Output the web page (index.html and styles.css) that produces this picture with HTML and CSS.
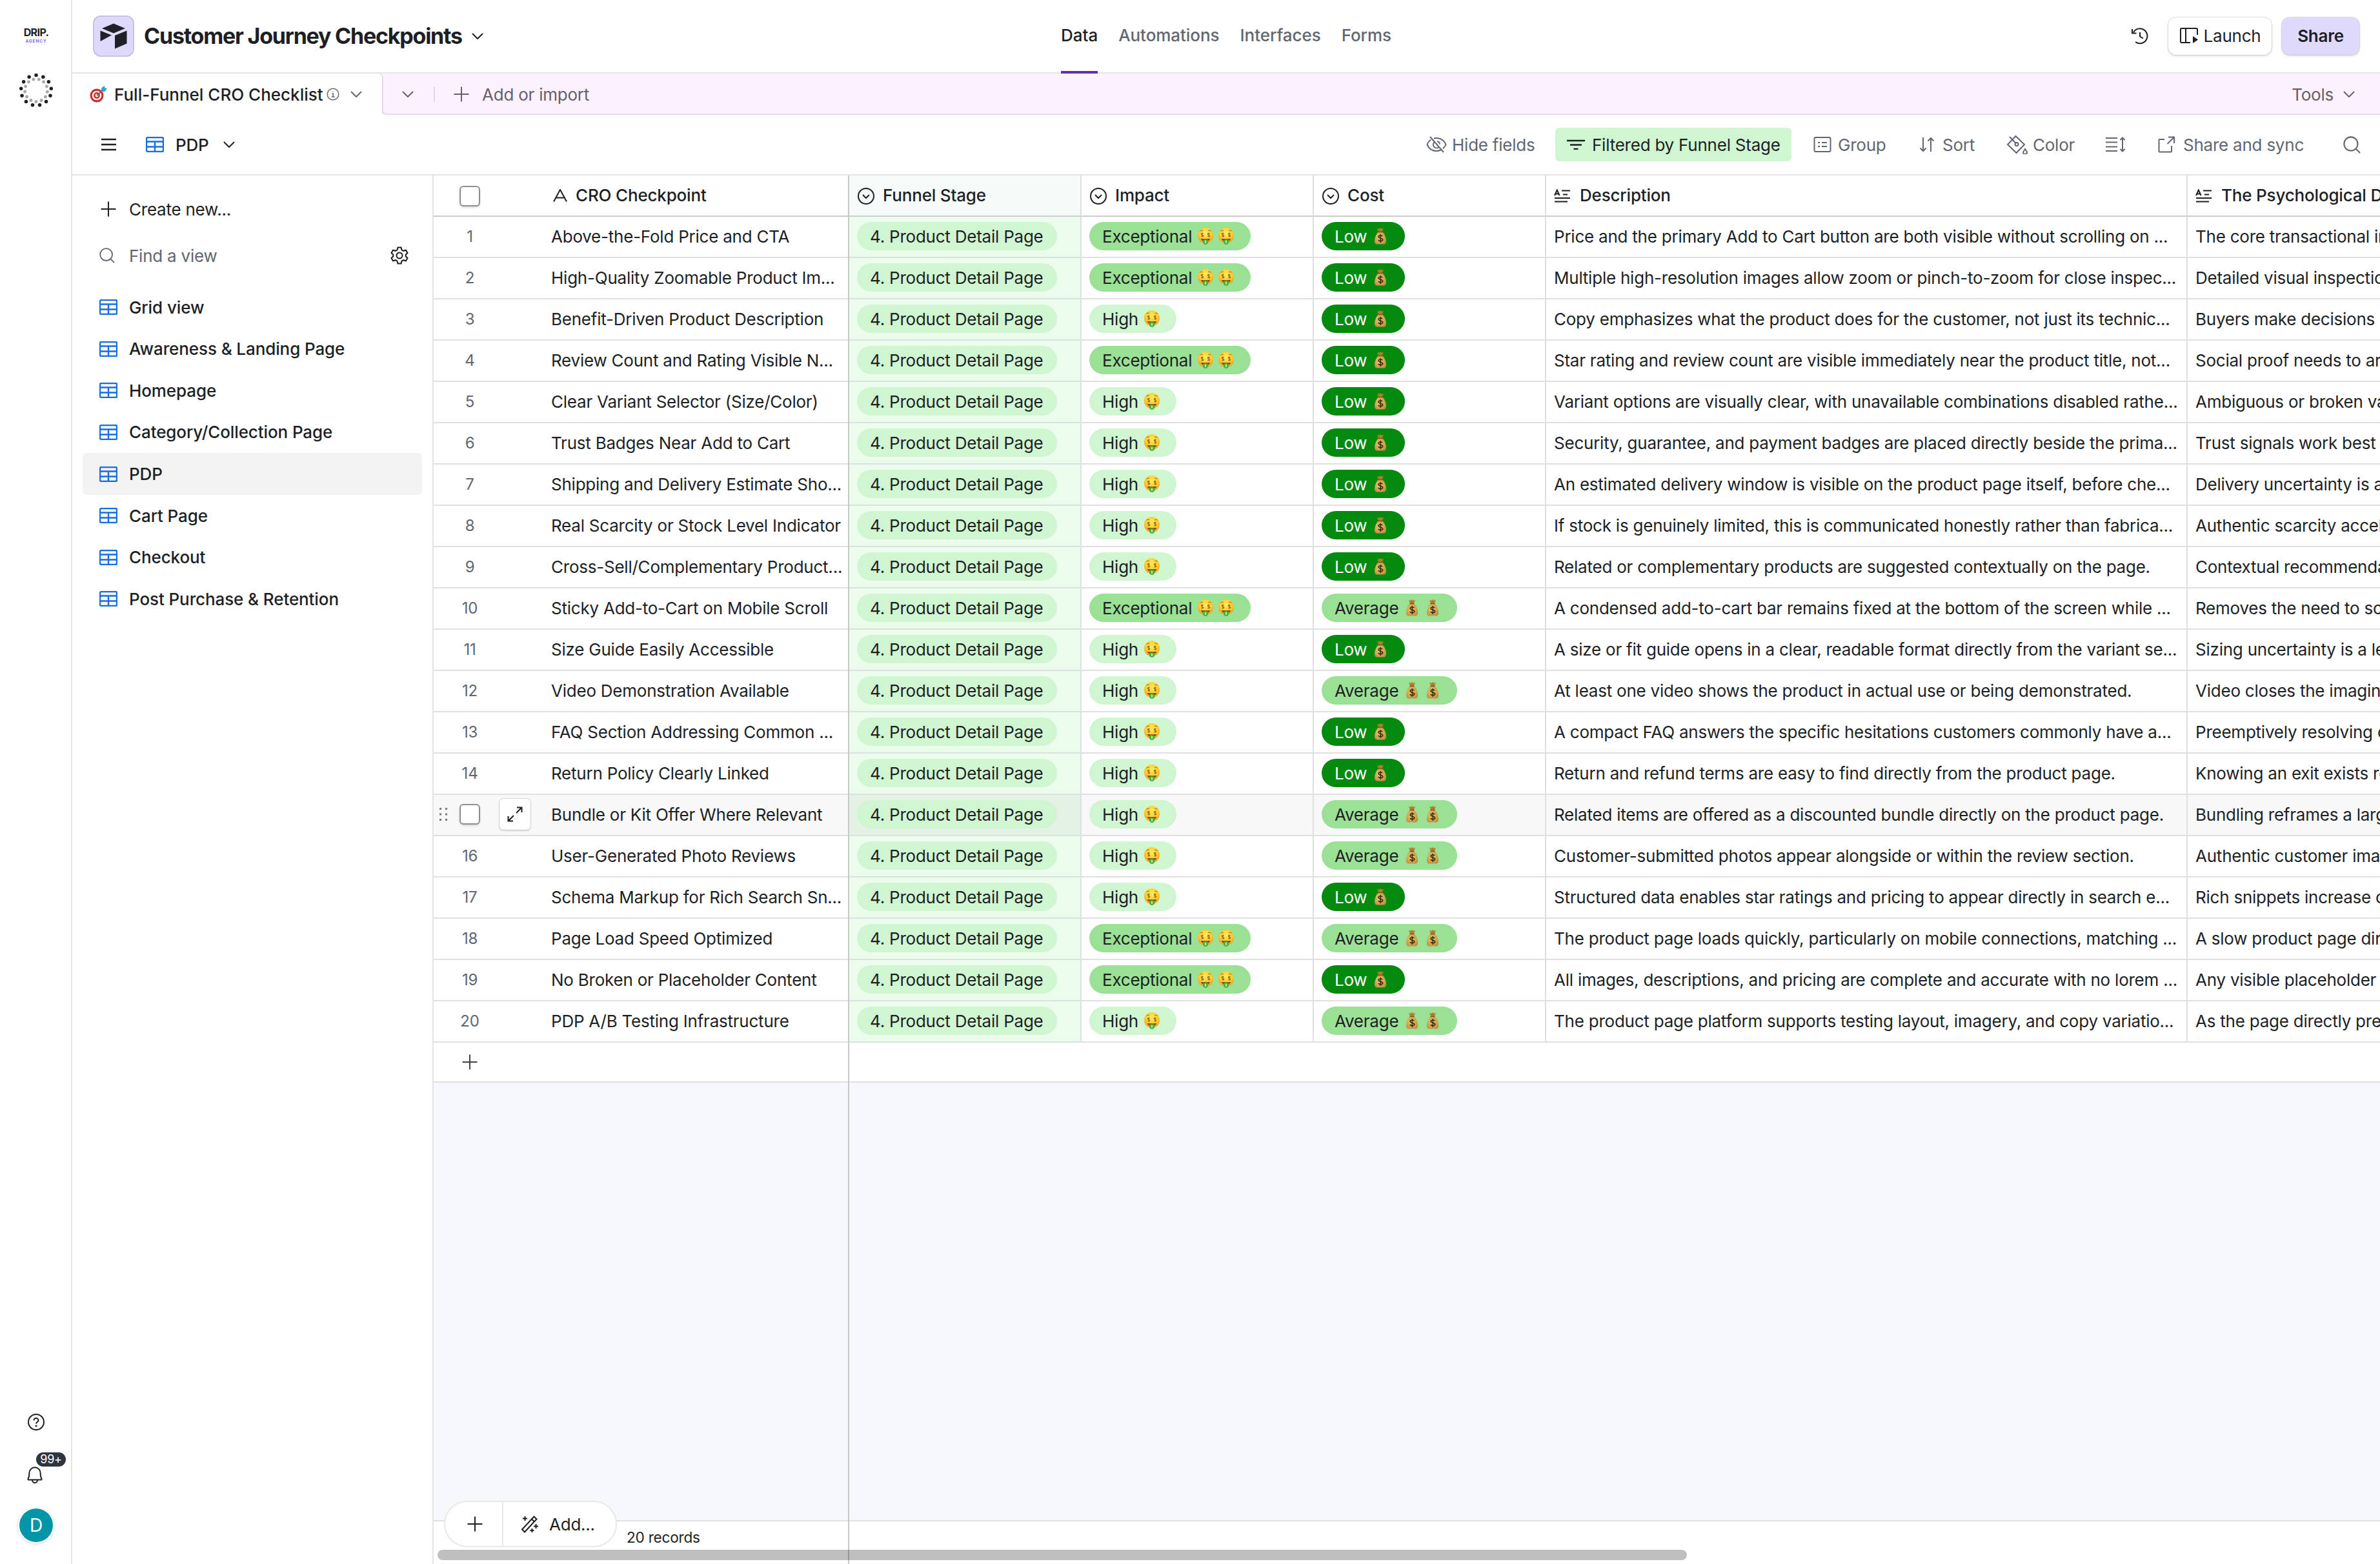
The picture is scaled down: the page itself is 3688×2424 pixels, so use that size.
FILE: index.html
```html
<!DOCTYPE html>
<html lang="en">
<head>
    <meta charset="UTF-8">
    <meta name="viewport" content="width=device-width, initial-scale=1.0">
    <title>Customer Journey Checkpoints</title>
    <link rel="stylesheet" href="styles.css">
</head>
<body>
    <!-- shared icons -->
    <svg class="sprite" width="0" height="0">
        <symbol id="i-grid" viewBox="0 0 28 24">
            <rect x="1" y="1" width="26" height="22" rx="2"/>
            <path d="M1 7.500h26M1 15.500h26M14 7.500V23"/>
        </symbol>
        <symbol id="i-chevron" viewBox="0 0 18 10"><path d="M1 1l8 8 8-8"/></symbol>
        <symbol id="i-plus" viewBox="0 0 24 24"><path d="M12 .5v23M.5 12h23"/></symbol>
        <symbol id="i-search" viewBox="0 0 26 26"><circle cx="11.500" cy="11.500" r="10.200"/><path d="M19 19l6 6"/></symbol>
        <symbol id="i-select" viewBox="0 0 28 28"><circle cx="14" cy="14" r="12"/><path d="M9 12l5 5 5-5"/></symbol>
        <symbol id="i-long" viewBox="0 0 26 22">
            <path d="M1 10l3.800-8.500L8.600 10M2.300 7.500h5M12 2.500h13M14 8.500h7M1 14h24M1 19.500h20"/>
        </symbol>
        <symbol id="i-face" viewBox="0 0 32 28">
            <circle cx="16" cy="13" r="12" fill="url(#face)"/>
            <path d="M9 17.800c2 .8 12 .8 14 0-.6 2.800-3.500 4.700-7 4.700s-6.400-1.900-7-4.700z" fill="#7a3a0c"/>
            <path d="M12 19.500h8v4.500c0 1.500-2 3-4 3s-4-1.500-4-3z" fill="#43b53a"/>
            <path d="M16 20.500v4.500" stroke="#b8f08a" stroke-width="2"/>
            <path d="M7.500 6.500c1-1.200 3-1.600 4.500-.8M20 5.700c1.500-.8 3.500-.4 4.500.8" stroke="#c07a12" stroke-width="1.200" fill="none"/>
            <path id="eye" d="M12.600 10.200c-1-1-3.200-.7-3.200.7 0 1.600 3.400 1 3.400 2.700 0 1.500-2.500 1.600-3.500.6M11 8.800v6.600" stroke="#94661a" stroke-width="1.100" fill="none"/>
            <use href="#eye" x="10"/>
        </symbol>
        <symbol id="i-bag" viewBox="0 0 32 28">
            <path d="M11 2l3 .8L16 1l2 1.800 3-.8-2.300 5.500h-5.400z" fill="#b47c30"/>
            <path d="M13 7.500h6c4 3 6 9.500 6 14 0 3.500-1.500 5-4 5H11c-2.500 0-4-1.500-4-5 0-4.500 2-11 6-14z" fill="url(#bag)"/>
            <path d="M12.500 7.400h7" stroke="#8a5420" stroke-width="1.600"/>
            <path d="M19.400 14.300c-1.300-2-6.300-1.700-6.300.7 0 3 6.600 1.600 6.600 4.600 0 2.700-5.600 2.600-6.900.4M16.300 11v13" stroke="#3a2a12" stroke-width="1.600" fill="none"/>
        </symbol>
        <defs>
            <radialGradient id="face" cx=".5" cy=".35" r=".65">
                <stop offset="0" stop-color="#ffee58"/>
                <stop offset=".65" stop-color="#fdc931"/>
                <stop offset="1" stop-color="#ee951c"/>
            </radialGradient>
            <radialGradient id="bag" cx=".45" cy=".45" r=".65">
                <stop offset="0" stop-color="#f0cf75"/>
                <stop offset="1" stop-color="#bb8a36"/>
            </radialGradient>
        </defs>
    </svg>

    <div class="app">
        <aside class="rail">
            <div class="brand">
                <span class="brand-name">DRIP.</span>
                <span class="brand-sub">AGENCY</span>
            </div>
            <svg class="spinner" width="52" height="52" viewBox="-26 -26 52 52">
                <circle r="23.500" class="dots dots-outer" pathLength="130"/>
                <circle r="17.500" class="dots dots-inner" pathLength="130"/>
            </svg>
            <div class="rail-bottom">
                <svg class="icon" width="28" height="28" viewBox="0 0 28 28"><circle cx="14" cy="14" r="12"/><path d="M10.500 11.500c0-5 7.200-4.500 7 0 0 2.500-3.500 2.500-3.500 5"/><circle cx="14" cy="20" r=".6"/></svg>
                <div class="bell">
                    <svg class="icon" width="26" height="28" viewBox="0 0 26 28"><path d="M3.500 21.500C2.300 21.500 2 20.500 2.700 19.500 4 17.500 4.300 15 4.300 11a8.700 8.700 0 0 1 17.400 0c0 4 .3 6.500 1.600 8.500.7 1 .4 2-.8 2zM9 22c0 5.500 8 5.500 8 0"/></svg>
                    <span class="badge">99+</span>
                </div>
                <div class="avatar">D</div>
            </div>
        </aside>

        <main class="main">
            <header class="topbar">
                <div class="base">
                    <div class="base-icon">
                        <svg width="44" height="60" viewBox="0 0 44 60"><path d="M4 16.500L22 9l18 7.500L22 24zM1.500 20L19 27 1.500 36.500zM42.500 20v20L24 48V27.500z" transform="translate(0 1.500)"/></svg>
                    </div>
                    <h1>Customer Journey Checkpoints</h1>
                    <svg class="icon" width="18" height="10"><use href="#i-chevron"/></svg>
                </div>
                <nav class="nav">
                    <a class="nav-item nav-item--active">Data</a>
                    <a class="nav-item">Automations</a>
                    <a class="nav-item">Interfaces</a>
                    <a class="nav-item">Forms</a>
                </nav>
                <div class="top-actions">
                    <svg class="icon" width="28" height="28" viewBox="0 0 28 28"><path d="M4 8A11.500 11.500 0 1 1 7 23M2 3v6.500h6.500M14 8v6.500l5 3"/></svg>
                    <button class="btn btn-launch">
                        <svg class="icon" width="30" height="24" viewBox="0 0 30 24"><path d="M17 23H3.500A1.500 1.500 0 0 1 2 21.500v-19A1.500 1.500 0 0 1 3.500 1h23A1.500 1.500 0 0 1 28 2.500V11M10 1v22"/><path d="M21 13l8 5.500-8 5.500z" fill="currentColor" stroke="none"/></svg>
                        Launch
                    </button>
                    <button class="btn btn-share">Share</button>
                </div>
            </header>

            <div class="tabs">
                <div class="tab">
                    <svg width="28" height="26" viewBox="0 0 28 26">
                        <circle cx="12" cy="15" r="10.500" fill="#d22b2b"/><circle cx="12" cy="15" r="7.300" fill="#fff"/>
                        <circle cx="12" cy="15" r="5" fill="#d22b2b"/><circle cx="12" cy="15" r="2.400" fill="#fff"/>
                        <path d="M12 15l9-8" stroke="#5b6470" stroke-width="2"/><path d="M18.500 9l1-6L24 0l.5 3.500L28 4l-3.500 5z" fill="#2ba6c4"/>
                    </svg>
                    <span class="tab-name">Full-Funnel CRO Checklist</span>
                    <svg class="icon tab-info" width="20" height="20" viewBox="0 0 20 20"><circle cx="10" cy="10" r="8.800"/><path d="M8.500 9h1.700v5M8 14h4.500M10 5.500v1"/></svg>
                    <svg class="icon tab-chevron" width="18" height="10"><use href="#i-chevron"/></svg>
                </div>
                <div class="tabs-rest">
                    <svg class="icon" width="18" height="10"><use href="#i-chevron"/></svg>
                    <span class="tabs-divider"></span>
                    <svg class="icon" width="24" height="24"><use href="#i-plus"/></svg>
                    <span class="add-import">Add or import</span>
                    <span class="tools">Tools</span>
                    <svg class="icon" width="18" height="10"><use href="#i-chevron"/></svg>
                </div>
            </div>

            <div class="toolbar">
                <svg class="icon hamburger" width="23" height="20" viewBox="0 0 23 20"><path d="M0 2h23M0 10h23M0 18h23"/></svg>
                <svg class="icon icon--blue" width="28" height="24"><use href="#i-grid"/></svg>
                <span class="view-name">PDP</span>
                <svg class="icon" width="18" height="10"><use href="#i-chevron"/></svg>
                <div class="tools-right">
                    <span class="tool tool-hide">
                        <svg class="icon" width="32" height="26" viewBox="0 0 32 26"><path d="M7 5.500C4.500 7.500 2.500 10 1.500 13c2.500 6 8 10 14.500 10 2.500 0 4.500-.5 6.500-1.500M12 3.500c8-2 15.500 2 18.500 9.500-1 2.500-2.500 4.500-4.500 6.300M12.500 9.500a5 5 0 0 0 6.800 7.500M17 8a5 5 0 0 1 4 4.500M6 1l21 24"/></svg>
                        Hide fields
                    </span>
                    <span class="tool tool-filter">
                        <svg class="icon" width="28" height="16" viewBox="0 0 28 16"><path d="M0 2h28M5 8.500h18M10.500 15h7"/></svg>
                        Filtered by Funnel Stage
                    </span>
                    <span class="tool tool-group">
                        <svg class="icon" width="28" height="24" viewBox="0 0 28 24"><rect x="1.500" y="1" width="25" height="22" rx="2"/><path d="M7 9h3M13 9h8M7 15h3M13 15h8"/></svg>
                        Group
                    </span>
                    <span class="tool tool-sort">
                        <svg class="icon" width="24" height="24" viewBox="0 0 24 24"><path d="M6 1v21M1.500 17.500L6 22l4.500-4.500M18 23V2M13.500 6.500L18 2l4.500 4.500"/></svg>
                        Sort
                    </span>
                    <span class="tool tool-color">
                        <svg class="icon" width="34" height="30" viewBox="0 0 34 30"><path d="M14.500 2L28 15 15.500 28 2 15zM5 3l10 10.500"/><circle cx="16" cy="14.500" r="2.500"/><path d="M29 22c1.500 2.500 3 4 3 5.200a3 2.500 0 0 1-6 0c0-1.200 1.500-2.700 3-5.200z"/></svg>
                        Color
                    </span>
                    <svg class="icon tool-height" width="30" height="24" viewBox="0 0 30 24"><path d="M0 2h18M0 8.500h18M0 15.500h18M0 22h18M26 2v20M22.500 5L26 1.500 29.500 5M22.500 19l3.500 3.500 3.500-3.500"/></svg>
                    <span class="tool tool-share">
                        <svg class="icon" width="26" height="26" viewBox="0 0 26 26"><path d="M10 5H2.500A1 1 0 0 0 1.500 6v17.500a1 1 0 0 0 1 1H20a1 1 0 0 0 1-1V15M16 1.500h9V11M25 1.500L14.500 12"/></svg>
                        Share and sync
                    </span>
                    <svg class="icon" width="27" height="27"><use href="#i-search"/></svg>
                </div>
            </div>

            <div class="content">
                <aside class="sidebar">
                    <div class="side-row">
                        <svg class="icon" width="24" height="24"><use href="#i-plus"/></svg>
                        <span>Create new...</span>
                    </div>
                    <div class="side-row side-row--find">
                        <svg class="icon" width="24" height="24"><use href="#i-search"/></svg>
                        <span>Find a view</span>
                        <svg class="icon gear" width="30" height="28" viewBox="0 0 30 28"><circle cx="15" cy="14" r="4.500"/><path d="M12.500 1.500h5l1 3.800 2.600 1.500 3.900-1.100 2.500 4.300-2.800 2.700v2.600l2.800 2.700-2.500 4.300-3.900-1.100-2.600 1.500-1 3.800h-5l-1-3.800-2.600-1.500L5 22.300 2.500 18l2.800-2.700v-2.600L2.500 10 5 5.700l3.900 1.100 2.600-1.500z"/></svg>
                    </div>
                    <ul class="views" id="views"></ul>
                </aside>

                <section class="grid">
                    <div class="row row--head">
                        <div class="cell cell-name">
                            <span class="gutter"><span class="checkbox"></span></span>
                            <svg class="icon head-a" width="22" height="20" viewBox="0 0 22 20"><path d="M1 19.500L11 1l10 18.500M4.500 13.500h13"/></svg>
                            CRO Checkpoint
                        </div>
                        <div class="cell cell-stage"><svg class="icon" width="28" height="28"><use href="#i-select"/></svg>Funnel Stage</div>
                        <div class="cell"><svg class="icon" width="28" height="28"><use href="#i-select"/></svg>Impact</div>
                        <div class="cell"><svg class="icon" width="28" height="28"><use href="#i-select"/></svg>Cost</div>
                        <div class="cell"><svg class="icon icon-long" width="26" height="22"><use href="#i-long"/></svg>Description</div>
                        <div class="cell"><svg class="icon icon-long" width="26" height="22"><use href="#i-long"/></svg>The Psychological Driver</div>
                    </div>
                    <div id="rows"></div>
                    <div class="row-add"><svg class="icon" width="24" height="24"><use href="#i-plus"/></svg></div>
                    <div class="grid-empty"></div>
                    <div class="grid-footer">20 records</div>

                    <div class="freeze-line"></div>
                    <div class="scrollbar"></div>
                    <div class="add-group">
                        <span class="add-plus"><svg class="icon" width="24" height="24"><use href="#i-plus"/></svg></span>
                        <span class="add-ai">
                            <svg class="icon" width="28" height="28" viewBox="0 0 28 28"><path d="M2 22.500L20.500 2.500l4 4L6 26.500zM17 6.500l4 4M6.500 2v7M3 5.500h7M23.500 14v7M20 17.500h7M17.500 21v6M14.500 24h6"/></svg>
                            Add...
                        </span>
                    </div>
                </section>
            </div>
        </main>
    </div>
    <script src="app.js"></script>
</body>
</html>
```
FILE: styles.css
```css
:root {
    --text: #1d1f25;
    --muted: #616670;
    --line: #dde1e3;
    --border: #e5e5e5;
    --blue: #166ee1;
    --green-light: #cff5d1;
    --green-mid: #9ae095;
    --green-dark: #048a0e;
}

* {
    box-sizing: border-box;
}

body {
    margin: 0;
    background: #fff;
    color: var(--text);
    font-family: Inter, "Liberation Sans", sans-serif;
    font-size: 26px;
    letter-spacing: -0.23px;
    overflow: hidden;
}

.sprite {
    position: absolute;
}

.icon {
    flex: none;
    fill: none;
    stroke: currentColor;
    stroke-width: 2;
}

.icon--blue {
    color: var(--blue);
    stroke-width: 2.4;
}

.app {
    display: flex;
    width: 100vw;
    height: 100vh;
}

/* left rail */
.rail {
    flex: none;
    width: 112px;
    border-right: 2px solid var(--border);
    display: flex;
    flex-direction: column;
    align-items: center;
    padding: 42px 0 34px 2px;
}

.brand {
    height: 72px;
    display: flex;
    flex-direction: column;
    align-items: center;
    line-height: 1;
}

.brand-name {
    font-size: 16px;
    font-weight: 700;
    letter-spacing: -0.6px;
}

.brand-sub {
    margin-top: 3px;
    font-size: 6.5px;
    font-weight: 600;
    letter-spacing: 0.9px;
    color: #6a5cf0;
}

.dots {
    fill: none;
    stroke-linecap: round;
    stroke-dasharray: 0 10;
    transform: rotate(-90deg);
}

.dots-outer {
    stroke: var(--text);
    stroke-width: 5.5;
}

.dots-inner {
    stroke: #aaa;
    stroke-width: 5;
    transform: rotate(-76deg);
}

.rail-bottom {
    margin-top: auto;
    display: flex;
    flex-direction: column;
    align-items: center;
}

.bell {
    position: relative;
    margin: 54px 4px 38px 0;
    height: 28px;
}

.badge {
    position: absolute;
    left: 15px;
    top: -21px;
    width: 46px;
    height: 22px;
    border-radius: 11px;
    background: #2f3441;
    color: #fff;
    font-size: 18px;
    line-height: 22px;
    text-align: center;
}

.avatar {
    width: 52px;
    height: 52px;
    border-radius: 50%;
    background: #0096a8;
    box-shadow: 0 0 0 2px #fff, 0 1px 5px 2px rgba(0,0,0,0.15);
    color: #fff;
    font-size: 28px;
    line-height: 52px;
    text-align: center;
}

.main {
    flex: 1;
    min-width: 0;
    display: flex;
    flex-direction: column;
}

/* top bar */
.topbar {
    flex: none;
    height: 114px;
    border-bottom: 2px solid var(--border);
    display: grid;
    grid-template-columns: 1fr auto 1fr;
    padding: 0 32px;
}

.base {
    display: flex;
    align-items: center;
}

.base-icon {
    width: 64px;
    height: 64px;
    border: 2px solid #c8c2e6;
    border-radius: 12px;
    background: #dfd9fc;
    display: flex;
    align-items: center;
    justify-content: center;
    fill: #1f2127;
}

h1 {
    margin: 0 15px 2px 15px;
    font-size: 34px;
    font-weight: 700;
    letter-spacing: -1.22px;
}

.nav {
    display: flex;
    gap: 32px;
}

.nav-item {
    height: 114px;
    margin-bottom: -2px;
    line-height: 110px;
    color: var(--muted);
    font-weight: 500;
    letter-spacing: -0.05px;
}

.nav-item--active {
    color: var(--text);
    border-bottom: 4px solid #6330b0;
}

.top-actions {
    display: flex;
    align-items: center;
    justify-content: flex-end;
}

.btn {
    height: 58px;
    border: none;
    border-radius: 12px;
    font: inherit;
    font-weight: 500;
    letter-spacing: inherit;
    color: inherit;
    background: #fff;
    box-shadow: 0 0 0 1px rgba(0,0,0,0.12), 0 2px 4px rgba(0,0,0,0.12);
    padding: 0 0 2px;
    display: flex;
    align-items: center;
    justify-content: center;
}

.btn-launch {
    width: 160px;
    margin: 0 16px 0 30px;
    gap: 8px;
    font-weight: 400;
}

.btn-share {
    width: 120px;
    background: #dfd9fc;
    font-weight: 600;
}

/* table tabs */
.tabs {
    flex: none;
    height: 64px;
    display: flex;
}

.tab {
    width: 480px;
    padding-left: 26px;
    display: flex;
    align-items: center;
    border-radius: 0 6px 0 0;
    box-shadow: 0 0 3px rgba(0,0,0,0.35);
    clip-path: inset(0 -4px 2px 0);
    position: relative;
    background: #fff;
    color: var(--muted);
}

.tab-name {
    margin-left: 11px;
    width: 324px;
    color: var(--text);
    font-weight: 500;
    letter-spacing: 0;
    white-space: nowrap;
}

.tab-info {
    margin: 0 17px 0 5px;
    stroke-width: 1.5;
}

.tabs-rest {
    flex: 1;
    display: flex;
    align-items: center;
    padding: 0 39px 0 31px;
    background: #fcf1fe;
    border-radius: 0 0 0 6px;
    box-shadow: inset 0 -2px 0 #e6dce8;
    color: #675f69;
}

.tabs-divider {
    width: 2px;
    height: 24px;
    margin: 0 29px 0 31px;
    background: #e3d9e5;
}

.add-import {
    margin-left: 20px;
}

.tools {
    margin: 0 15px 0 auto;
}

/* toolbar */
.toolbar {
    flex: none;
    height: 94px;
    border-bottom: 2px solid var(--border);
    padding: 0 30px 0 45px;
    display: flex;
    align-items: center;
}

.hamburger {
    margin-right: 46px;
    stroke-width: 2.4;
}

.view-name {
    margin: 0 23px 0 18px;
    font-weight: 500;
}

.tools-right {
    margin-left: auto;
    display: flex;
    align-items: center;
    color: var(--muted);
}

.tool {
    display: flex;
    align-items: center;
    gap: 10px;
    white-space: nowrap;
}

.tool-hide {
    width: 200px;
    gap: 8px;
}

.tool-filter {
    width: 366px;
    height: 52px;
    padding-left: 18px;
    gap: 11px;
    border-radius: 6px;
    background: var(--green-light);
    color: var(--text);
}

.tool-filter .icon {
    stroke-width: 2.6;
}

.tool-group {
    margin-left: 34px;
    width: 164px;
}

.tool-sort {
    width: 135px;
    gap: 12px;
}

.tool-color {
    width: 154px;
    gap: 7px;
}

.tool-share {
    margin-left: 51px;
    width: 287px;
    gap: 13px;
}

.content {
    flex: 1;
    min-height: 0;
    display: flex;
}

/* view sidebar */
.sidebar {
    flex: none;
    width: 560px;
    border-right: 2px solid var(--border);
    padding: 16px 16px 0;
}

.side-row {
    height: 72px;
    padding: 0 20px 0 28px;
    display: flex;
    align-items: center;
    gap: 20px;
}

.side-row--find {
    padding-left: 26px;
    gap: 22px;
    color: var(--muted);
}

.gear {
    margin-left: auto;
    color: var(--text);
}

.views {
    list-style: none;
    margin: 12px 0 0;
    padding: 0;
}

.view {
    height: 64.57px;
    padding-left: 26px;
    display: flex;
    align-items: center;
    gap: 18px;
    font-weight: 500;
    letter-spacing: -0.1px;
    border-radius: 6px;
}

.view--active {
    background: #f3f3f3;
}

/* records grid */
.grid {
    flex: 1;
    min-width: 0;
    position: relative;
    display: flex;
    flex-direction: column;
    overflow: hidden;
}

.row {
    display: grid;
    grid-template-columns: 644px 360px 360px 360px 994px 1fr;
    height: 64px;
    white-space: nowrap;
}

.cell {
    min-width: 0;
    overflow: hidden;
    padding: 0 0 2px 12px;
    display: flex;
    align-items: center;
    border-right: 2px solid var(--line);
    border-bottom: 2px solid var(--line);
}

.cell:last-child {
    border-right: none;
}

.row--head {
    font-weight: 500;
    letter-spacing: -0.18px;
}

.row--head .cell {
    gap: 12px;
    border-bottom-color: #ccc;
}

.row--head .icon,
.row--head .gutter {
    margin-top: 4px;
}

.row--head .icon-long {
    margin-right: 2px;
}

.cell.cell-name {
    padding-left: 0;
    gap: 0;
}

.row--head .head-a {
    margin: 2px 13px 0 3px;
}

.cell-stage {
    background: #ebfbec;
}

.row--head .cell-stage {
    background: #f5fbf8;
}

.gutter {
    flex: none;
    width: 182px;
    display: flex;
    align-items: center;
}

.number {
    width: 112px;
    text-align: center;
    font-size: 24px;
    color: var(--muted);
}

.checkbox {
    width: 32px;
    height: 32px;
    margin-left: 40px;
    border: 2px solid #8f8f8f;
    border-radius: 6px;
    background: #fff;
    box-shadow: 0 2px 3px rgba(0,0,0,0.12);
}

.row--hover .cell {
    background: #f8f8f8;
}

.row--hover .cell-stage {
    background: #e4f2e5;
}

.drag {
    margin: 0 18px 0 9px;
    fill: #777;
    stroke: none;
}

.row--hover .checkbox {
    margin-left: 0;
}

.expand {
    margin-left: 30px;
    width: 48px;
    height: 48px;
    border-radius: 6px;
    background: #fff;
    box-shadow: 0 0 0 1px rgba(0,0,0,0.12), 0 2px 3px rgba(0,0,0,0.12);
    display: flex;
    align-items: center;
    justify-content: center;
}

.pill {
    height: 44px;
    padding: 0 22px 0 20px;
    border-radius: 22px;
    display: flex;
    align-items: center;
    background: var(--green-light);
}

.pill span {
    margin-right: 5px;
}

.cell-stage .pill {
    padding: 0 16px 0 20px;
}

.pill--mid {
    background: var(--green-mid);
}

.pill--dark {
    background: var(--green-dark);
    color: #fff;
}

.row-add {
    flex: none;
    height: 62px;
    padding-left: 44px;
    display: flex;
    align-items: center;
    border-bottom: 2px solid var(--line);
    color: #444;
}

.grid-empty {
    flex: 1;
    background: #f6f8fc;
}

.grid-footer {
    flex: none;
    height: 68px;
    border-top: 2px solid #dee0e5;
    padding: 11px 0 0 299px;
    font-size: 22.6px;
}

.freeze-line {
    position: absolute;
    left: 642px;
    top: 0;
    bottom: 0;
    width: 2px;
    background: #c8c8c8;
}

.scrollbar {
    position: absolute;
    left: 6px;
    bottom: 6px;
    width: 1936px;
    height: 16px;
    border-radius: 8px;
    background: rgba(0,0,0,0.25);
}

.add-group {
    position: absolute;
    left: 16px;
    bottom: 26px;
    width: 268px;
    height: 72px;
    border: 2px solid #e8e8e8;
    border-radius: 36px;
    background: #fff;
    display: flex;
}

.add-plus {
    flex: none;
    width: 90px;
    padding-left: 4px;
    border-right: 2px solid #e8e8e8;
    display: flex;
    align-items: center;
    justify-content: center;
}

.add-ai {
    display: flex;
    align-items: center;
    gap: 16px;
    padding-left: 27px;
}
```
FILE: app.js
```js
const views = [
    'Grid view', 'Awareness & Landing Page', 'Homepage', 'Category/Collection Page',
    'PDP', 'Cart Page', 'Checkout', 'Post Purchase & Retention'
];

// name, impact, cost, description, psychological driver
const records = [
    ['Above-the-Fold Price and CTA', 'Exceptional', 'Low', 'Price and the primary Add to Cart button are both visible without scrolling on ...', 'The core transactional information'],
    ['High-Quality Zoomable Product Im...', 'Exceptional', 'Low', 'Multiple high-resolution images allow zoom or pinch-to-zoom for close inspec...', 'Detailed visual inspection'],
    ['Benefit-Driven Product Description', 'High', 'Low', 'Copy emphasizes what the product does for the customer, not just its technic...', 'Buyers make decisions based'],
    ['Review Count and Rating Visible N...', 'Exceptional', 'Low', 'Star rating and review count are visible immediately near the product title, not...', 'Social proof needs to arrive'],
    ['Clear Variant Selector (Size/Color)', 'High', 'Low', 'Variant options are visually clear, with unavailable combinations disabled rathe...', 'Ambiguous or broken variant'],
    ['Trust Badges Near Add to Cart', 'High', 'Low', 'Security, guarantee, and payment badges are placed directly beside the prima...', 'Trust signals work best at'],
    ['Shipping and Delivery Estimate Sho...', 'High', 'Low', 'An estimated delivery window is visible on the product page itself, before che...', 'Delivery uncertainty is a'],
    ['Real Scarcity or Stock Level Indicator', 'High', 'Low', 'If stock is genuinely limited, this is communicated honestly rather than fabrica...', 'Authentic scarcity accelerates'],
    ['Cross-Sell/Complementary Product...', 'High', 'Low', 'Related or complementary products are suggested contextually on the page.', 'Contextual recommendations'],
    ['Sticky Add-to-Cart on Mobile Scroll', 'Exceptional', 'Average', 'A condensed add-to-cart bar remains fixed at the bottom of the screen while ...', 'Removes the need to scroll'],
    ['Size Guide Easily Accessible', 'High', 'Low', 'A size or fit guide opens in a clear, readable format directly from the variant se...', 'Sizing uncertainty is a leading'],
    ['Video Demonstration Available', 'High', 'Average', 'At least one video shows the product in actual use or being demonstrated.', 'Video closes the imagination'],
    ['FAQ Section Addressing Common ...', 'High', 'Low', 'A compact FAQ answers the specific hesitations customers commonly have a...', 'Preemptively resolving objections'],
    ['Return Policy Clearly Linked', 'High', 'Low', 'Return and refund terms are easy to find directly from the product page.', 'Knowing an exit exists reduces'],
    ['Bundle or Kit Offer Where Relevant', 'High', 'Average', 'Related items are offered as a discounted bundle directly on the product page.', 'Bundling reframes a larger'],
    ['User-Generated Photo Reviews', 'High', 'Average', 'Customer-submitted photos appear alongside or within the review section.', 'Authentic customer images'],
    ['Schema Markup for Rich Search Sn...', 'High', 'Low', 'Structured data enables star ratings and pricing to appear directly in search e...', 'Rich snippets increase click'],
    ['Page Load Speed Optimized', 'Exceptional', 'Average', 'The product page loads quickly, particularly on mobile connections, matching ...', 'A slow product page directly'],
    ['No Broken or Placeholder Content', 'Exceptional', 'Low', 'All images, descriptions, and pricing are complete and accurate with no lorem ...', 'Any visible placeholder text'],
    ['PDP A/B Testing Infrastructure', 'High', 'Average', 'The product page platform supports testing layout, imagery, and copy variatio...', 'As the page directly precedes']
];

const HOVERED = 15;

// pill class, emoji icon and how many of them
const options = {
    Exceptional: ['pill--mid', 'i-face', 2],
    High: ['', 'i-face', 1],
    Average: ['pill--mid', 'i-bag', 2],
    Low: ['pill--dark', 'i-bag', 1]
};

function pill(label) {
    const [cls, emoji, count] = options[label];
    const svg = `<svg width="32" height="28"><use href="#${emoji}"/></svg>`;
    return `<div class="pill ${cls}"><span>${label}</span>${svg.repeat(count)}</div>`;
}

function gutter(n) {
    if (n !== HOVERED) return `<span class="gutter"><span class="number">${n}</span></span>`;
    return `<span class="gutter">
        <svg class="drag" width="13" height="20" viewBox="0 0 13 20"><path d="M0 0h3v3H0zM9 0h3v3H9zM0 8.500h3v3H0zM9 8.500h3v3H9zM0 17h3v3H0zM9 17h3v3H9z"/></svg>
        <span class="checkbox"></span>
        <span class="expand"><svg class="icon" width="24" height="24" viewBox="0 0 24 24"><path d="M14 10l8-8M15 1.500h7.500V9M10 14l-8 8M1.500 15v7.500H9"/></svg></span>
    </span>`;
}

document.getElementById('views').innerHTML = views.map(v => `
    <li class="view${v === 'PDP' ? ' view--active' : ''}">
        <svg class="icon icon--blue" width="28" height="24"><use href="#i-grid"/></svg>
        <span>${v.replace('&', '&amp;')}</span>
    </li>`).join('');

document.getElementById('rows').innerHTML = records.map(([name, impact, cost, desc, driver], i) => `
    <div class="row${i + 1 === HOVERED ? ' row--hover' : ''}">
        <div class="cell cell-name">${gutter(i + 1)}${name}</div>
        <div class="cell cell-stage"><div class="pill"><span>4. Product Detail Page</span></div></div>
        <div class="cell">${pill(impact)}</div>
        <div class="cell">${pill(cost)}</div>
        <div class="cell">${desc}</div>
        <div class="cell">${driver}</div>
    </div>`).join('');
```
